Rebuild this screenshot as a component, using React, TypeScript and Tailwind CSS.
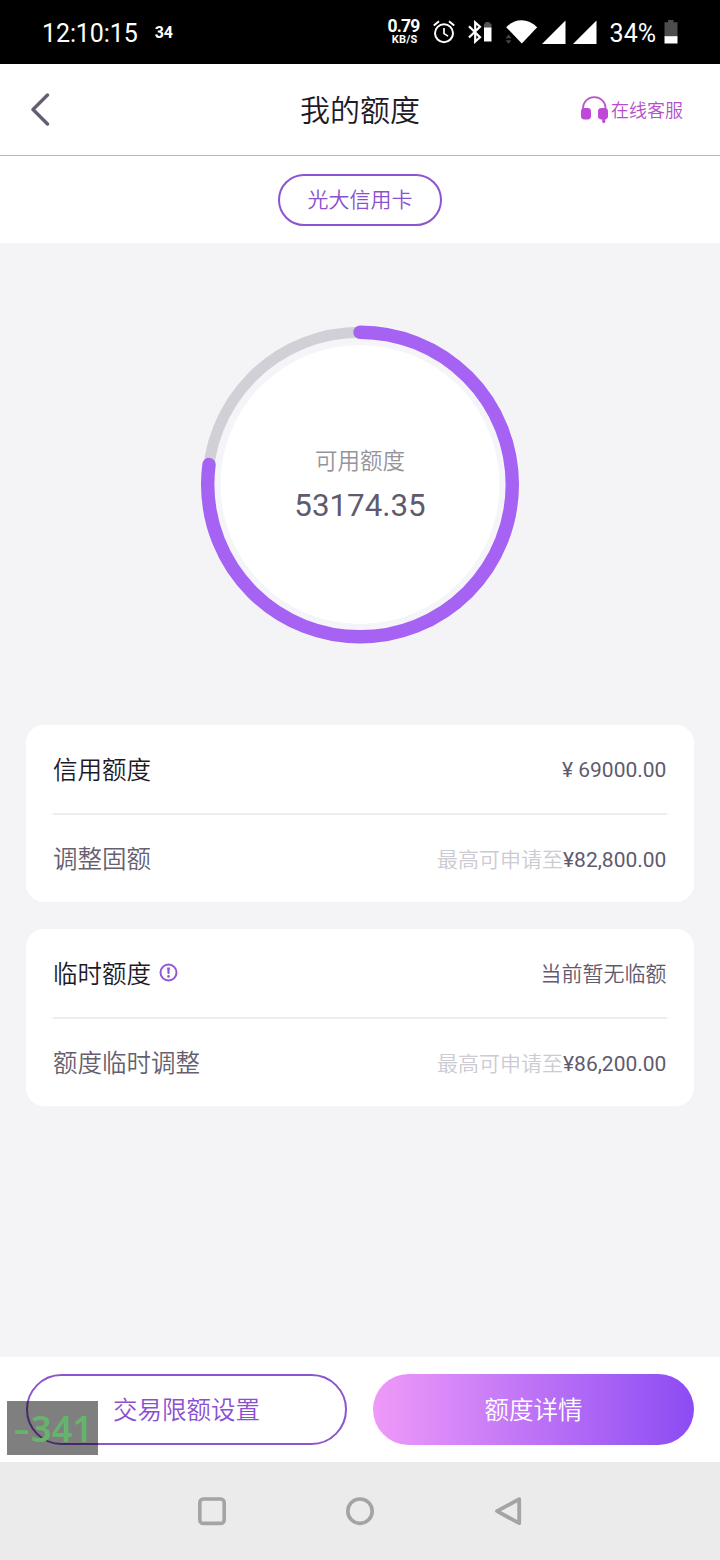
import type { ReactNode } from 'react';

const CREDIT_LIMIT = 69000;
const AVAILABLE = 53174.35;

const RING_RADIUS = 152.3;
const RING_LENGTH = 2 * Math.PI * RING_RADIUS;

function SignalIcon() {
  return (
    <svg width="24" height="25" viewBox="0 0 24 25" fill="#fff">
      <path d="M23.5 0.5V24H0z" />
    </svg>
  );
}

function StatusBar() {
  return (
    <div className="flex h-16 items-center bg-black pl-[42px] pr-[42px] text-white">
      <span className="pt-[3px] text-[25px] leading-none tracking-[-0.1px]">12:10:15</span>
      <span className="ml-[17px] pt-[2px] text-[16px] leading-none font-bold">34</span>

      <div className="ml-auto flex items-center">
        <div className="flex w-8 flex-col items-center pb-[2px] font-bold">
          <span className="text-[17.5px] leading-[16px] tracking-[-0.8px]">0.79</span>
          <span className="pl-[2px] text-[11px] leading-[11px] tracking-[0.2px]">KB/S</span>
        </div>

        {/* Alarm */}
        <svg className="ml-[13px]" width="22" height="24" viewBox="0 0 22 24" fill="none" stroke="#fff" strokeWidth="2">
          <circle cx="11" cy="13.2" r="9" />
          <path d="M11 8v5.6l4 2.5" strokeWidth="1.7" />
          <path d="M0.8 5.6 6 1.2M21.2 5.6 16 1.2" />
        </svg>

        {/* Bluetooth with the headset battery */}
        <svg className="ml-[13px]" width="25" height="24" viewBox="0 0 25 24">
          <path d="M1 6.3 12 17.3 7.2 21.6V2.4L12 6.7 1 17.5" fill="none" stroke="#fff" strokeWidth="2.2" />
          <path d="M17.5 2h4v1.5H23.5V8H16V3.5h1.5z" fill="#555" />
          <path d="M16 7.5h7.5V21.5H16z" fill="#fff" />
        </svg>

        {/* Wi-Fi */}
        <svg className="ml-[12px]" width="33" height="25" viewBox="0 0 33 25">
          <path d="M1.2 7.2C10-2 23-2 32.2 7.2L16.8 23.6z" fill="#fff" />
          <path d="M0.5 18.2 3.5 14.5 6.5 18.2zM0.5 20.2 3.5 23.7 6.5 20.2z" fill="#444" />
        </svg>

        <div className="ml-[4px] flex gap-[7px]">
          <SignalIcon />
          <SignalIcon />
        </div>

        <span className="ml-[13px] pt-[3px] text-[25px] leading-none">34%</span>

        <svg className="ml-[8px]" width="14" height="24" viewBox="0 0 14 24">
          <path d="M4 0h5.5v2.2H13.5V17H0.5V2.2H4z" fill="#4d4d4d" />
          <path d="M0.5 16.2h13V23.5h-13z" fill="#fff" />
        </svg>
      </div>
    </div>
  );
}

function Header() {
  return (
    <header className="grid h-[92px] grid-cols-[1fr_auto_1fr] items-center border-b border-[#b8b8ba] bg-white px-[30px]">
      <svg width="20" height="34" viewBox="0 0 20 34" fill="none" stroke="#655d70" strokeWidth="3.4" strokeLinecap="round" strokeLinejoin="round">
        <path d="M17.5 2 3 16.5 17.5 31" />
      </svg>
      <h1 className="pt-[2px] text-center text-[30px] leading-none font-[350] whitespace-nowrap text-[#1e1a28]">我的额度</h1>
      <div className="flex items-center justify-end pr-[7px] text-[#b44fcb]">
        <svg width="29" height="28" viewBox="0 0 29 28" fill="#c048d8">
          <path d="M3 14V12.2a11.3 11 0 0 1 22.6 0V14" fill="none" stroke="#b956cd" strokeWidth="1.7" />
          <rect x="1" y="12" width="10" height="11.5" rx="3.4" />
          <rect x="18" y="12" width="10" height="11.5" rx="3.4" />
          <path d="M22.2 23h3v3.2l-1.5 1-1.5-1z" />
        </svg>
        <span className="ml-[2px] pt-[2px] text-[18px] leading-none font-[350]">在线客服</span>
      </div>
    </header>
  );
}

function LimitGauge() {
  const used = (AVAILABLE / CREDIT_LIMIT) * RING_LENGTH;

  return (
    <div className="mt-[81px] grid place-items-center">
      <svg className="col-start-1 row-start-1" width="320" height="320" viewBox="0 0 320 320" fill="none">
        <circle cx="160" cy="160.5" r="146" fill="#f5f4f8" />
        <circle cx="160" cy="160.5" r="139.5" fill="#fff" />
        <circle cx="160" cy="160.5" r={RING_RADIUS} stroke="#d2d0d7" strokeWidth="11" />
        <circle
          cx="160"
          cy="160.5"
          r={RING_RADIUS}
          stroke="#a562f3"
          strokeWidth="13.4"
          strokeLinecap="round"
          strokeDasharray={`${used} ${RING_LENGTH}`}
          transform="rotate(-90 160 160.5)"
        />
      </svg>
      <div className="col-start-1 row-start-1 flex flex-col items-center pt-[4px]">
        <span className="text-[22.5px] leading-[30px] font-[350] text-[#95939b]">可用额度</span>
        <span className="mt-[10px] text-[31.3px] leading-[40px] text-[#5f5a6d]">53174.35</span>
      </div>
    </div>
  );
}

function Card({ children }: { children: ReactNode }) {
  return (
    <section className="mx-[26px] h-[177px] divide-y-2 divide-[#ededef] rounded-[18px] bg-white px-[27px]">
      {children}
    </section>
  );
}

function Row({ label, muted, children }: { label: ReactNode; muted?: boolean; children: ReactNode }) {
  return (
    <div className={muted ? 'flex h-[87px] items-center justify-between pt-[4px]' : 'flex h-[90px] items-center justify-between pt-[4px]'}>
      <span className={muted ? 'text-[24.5px] font-[350] text-[#655f70]' : 'flex items-center text-[24.5px] font-[350] text-[#1e1a28]'}>
        {label}
      </span>
      <span className="pr-[0.6px] text-[21px] text-[#5f5a6d]">{children}</span>
    </div>
  );
}

function InfoIcon() {
  return (
    <svg className="mb-[5px] ml-[8px]" width="19" height="19" viewBox="0 0 19 19" fill="none" stroke="#9257d3" strokeWidth="2">
      <circle cx="9.5" cy="9.5" r="8" />
      <path d="M8.1 4.4h2.8l-.5 6.6H8.6z" fill="#9257d3" stroke="none" />
      <circle cx="9.5" cy="13.4" r="1.3" fill="#9257d3" stroke="none" />
    </svg>
  );
}

function FooterActions() {
  return (
    <div className="relative grid h-[105px] grid-cols-2 gap-[26px] bg-white px-[26px] pt-[17px]">
      <button className="h-[71px] rounded-full border-2 border-[#8b55d0] pt-[3px] text-[24.5px] font-[350] text-[#8b50d2]">
        交易限额设置
      </button>
      <button className="h-[71px] rounded-full bg-linear-to-r/srgb from-[#ef9af9] to-[#8c4cf3] pt-[3px] text-[24.5px] font-[350] text-white">
        额度详情
      </button>

      {/* Battery current overlay */}
      <div className="absolute top-[44px] left-[7px] flex h-[54px] w-[91px] items-center justify-center bg-black/50 pt-[2px] font-['Noto_Sans'] text-[36px] leading-none font-semibold text-[#66b46b]">
        <span className="w-[19px] scale-x-140 text-center">-</span>341
      </div>
    </div>
  );
}

function NavBar() {
  return (
    <nav className="flex h-[98px] items-center justify-center gap-[118px] bg-[#ebebeb]">
      <svg width="30" height="30" viewBox="0 0 30 30" fill="none" stroke="#a4a4a4" strokeWidth="3.6">
        <rect x="2.8" y="3" width="24.4" height="24.4" rx="3.5" />
      </svg>
      <svg width="30" height="30" viewBox="0 0 30 30" fill="none" stroke="#a4a4a4" strokeWidth="3.6">
        <circle cx="15" cy="15.2" r="12.2" />
      </svg>
      <svg width="30" height="30" viewBox="0 0 30 30" fill="none" stroke="#a4a4a4" strokeWidth="3.8" strokeLinejoin="round">
        <path d="M4 15.2 26.2 3.2v24z" />
      </svg>
    </nav>
  );
}

export default function App() {
  return (
    <div className="flex h-[1560px] w-[720px] flex-col overflow-hidden bg-[#f4f4f7] font-[Roboto,'Noto_Sans_CJK_SC',sans-serif]">
      <StatusBar />
      <Header />

      <div className="flex h-[87px] items-center justify-center bg-white">
        <span className="flex h-[52px] w-[164px] items-center justify-center rounded-full border-2 border-[#8b55d0] pt-[3px] text-[21px] font-[350] text-[#8b50d2]">
          光大信用卡
        </span>
      </div>

      <main className="flex flex-1 flex-col">
        <LimitGauge />

        <div className="mt-[81px] flex flex-col gap-[27px]">
          <Card>
            <Row label="信用额度">¥ 69000.00</Row>
            <Row label="调整固额" muted>
              <span className="font-[350] text-[#cccad2]">最高可申请至</span>¥82,800.00
            </Row>
          </Card>
          <Card>
            <Row label={<>临时额度<InfoIcon /></>}>
              <span className="font-[350]">当前暂无临额</span>
            </Row>
            <Row label="额度临时调整" muted>
              <span className="font-[350] text-[#cccad2]">最高可申请至</span>¥86,200.00
            </Row>
          </Card>
        </div>
      </main>

      <FooterActions />
      <NavBar />
    </div>
  );
}
